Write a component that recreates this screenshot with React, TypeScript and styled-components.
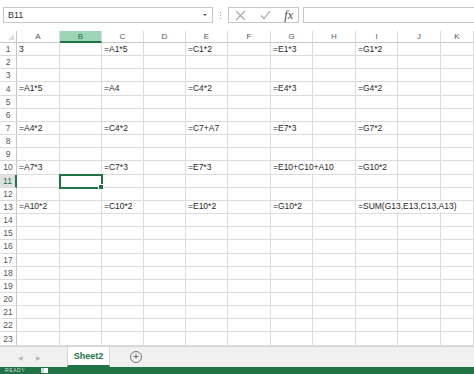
import React from "react";
import styled, { createGlobalStyle, css } from "styled-components";

const GREEN = "#217346";
const GRID = "#dcdcdc";
const HEAD_LINE = "#c8c8c8";

const COLUMNS = ["A", "B", "C", "D", "E", "F", "G", "H", "I", "J", "K"];
const ROW_COUNT = 23;
const ACTIVE = { col: "B", row: 11 };

const FORMULAS: Record<number, Record<string, string>> = {
  1: { A: "3", C: "=A1*5", E: "=C1*2", G: "=E1*3", I: "=G1*2" },
  4: { A: "=A1*5", C: "=A4", E: "=C4*2", G: "=E4*3", I: "=G4*2" },
  7: { A: "=A4*2", C: "=C4*2", E: "=C7+A7", G: "=E7*3", I: "=G7*2" },
  10: { A: "=A7*3", C: "=C7*3", E: "=E7*3", G: "=E10+C10+A10", I: "=G10*2" },
  13: { A: "=A10*2", C: "=C10*2", E: "=E10*2", G: "=G10*2", I: "=SUM(G13,E13,C13,A13)" },
};

const GlobalStyle = createGlobalStyle`
  html, body {
    margin: 0;
    padding: 0;
    background: #ffffff;
    font-family: "Liberation Sans", Arial, sans-serif;
  }
`;

const Window = styled.div`
  width: 474px;
  height: 374px;
  display: flex;
  flex-direction: column;
  overflow: hidden;
  background: #ffffff;
`;

/* formula bar */

const FormulaBar = styled.div`
  height: 31px;
  flex: none;
  display: flex;
  align-items: flex-start;
  padding: 7px 0 0 3px;
  box-sizing: border-box;
`;

const NameBox = styled.div`
  width: 210px;
  height: 16px;
  box-sizing: border-box;
  border: 1px solid #c6c6c6;
  display: flex;
  align-items: center;
  justify-content: space-between;
  padding: 0 5px 0 4px;
  font-size: 9px;
  color: #333;
`;

const DropArrow = styled.span`
  width: 0;
  height: 0;
  border-left: 2px solid transparent;
  border-right: 2px solid transparent;
  border-top: 2px solid #555;
`;

const Grip = styled.div`
  width: 15px;
  height: 16px;
  display: flex;
  flex-direction: column;
  align-items: center;
  justify-content: center;
  gap: 2px;

  span {
    width: 1px;
    height: 1px;
    background: #9a9a9a;
  }
`;

const FxBox = styled.div`
  width: 71px;
  height: 16px;
  box-sizing: border-box;
  border: 1px solid #c6c6c6;
  display: flex;
  align-items: center;
  justify-content: space-between;
  padding: 0 5px 0 6px;
`;

const FxLabel = styled.span`
  font-family: "Liberation Serif", "Times New Roman", serif;
  font-style: italic;
  font-size: 12px;
  color: #444;
  line-height: 1;
`;

const FormulaInput = styled.div`
  flex: 1;
  height: 16px;
  margin-left: 4px;
  box-sizing: border-box;
  border: 1px solid #c6c6c6;
  border-right: none;
`;

/* sheet */

const Sheet = styled.div`
  flex: none;
  height: 315px;
  display: grid;
  grid-template-columns: 17px 43px 42px 42px 42px 42px 43px 42px 43px 42px 43px 1fr;
  grid-template-rows: 12px repeat(${ROW_COUNT}, 13.17px);
  overflow: hidden;
  font-size: 8.5px;
  color: #1f1f1f;
`;

const Corner = styled.div`
  border-right: 1px solid ${HEAD_LINE};
  border-bottom: 1px solid ${HEAD_LINE};
  display: flex;
  align-items: flex-end;
  justify-content: flex-end;
  padding: 0 2px 2px 0;

  &::after {
    content: "";
    width: 0;
    height: 0;
    border-left: 6px solid transparent;
    border-bottom: 6px solid #dcdcdc;
  }
`;

const ColHeader = styled.div<{ $active?: boolean }>`
  display: flex;
  align-items: center;
  justify-content: center;
  font-size: 8px;
  color: #555;
  border-right: 1px solid ${GRID};
  border-bottom: 1px solid ${HEAD_LINE};

  ${(p) =>
    p.$active &&
    css`
      background: #9fd5b7;
      color: ${GREEN};
      border-bottom: 2px solid ${GREEN};
    `}
`;

const RowHeader = styled.div<{ $active?: boolean }>`
  display: flex;
  align-items: center;
  justify-content: center;
  font-size: 8.5px;
  color: #555;
  border-right: 1px solid ${HEAD_LINE};
  border-bottom: 1px solid ${GRID};

  ${(p) =>
    p.$active &&
    css`
      background: #e1e1e1;
      color: ${GREEN};
      border-right: 2px solid ${GREEN};
    `}
`;

const Cell = styled.div<{ $selected?: boolean }>`
  position: relative;
  display: flex;
  align-items: center;
  padding-left: 2px;
  white-space: nowrap;
  overflow: visible;
  border-right: 1px solid ${GRID};
  border-bottom: 1px solid ${GRID};

  ${(p) =>
    p.$selected &&
    css`
      z-index: 2;
      outline: 2px solid ${GREEN};
      outline-offset: -1px;

      &::after {
        content: "";
        position: absolute;
        right: -3px;
        bottom: -3px;
        width: 4px;
        height: 4px;
        background: ${GREEN};
        border: 1px solid #ffffff;
      }
    `}
`;

const CellText = styled.span`
  position: relative;
  z-index: 1;
  background: #ffffff;
  padding-right: 2px;
  line-height: 11px;
`;

/* sheet tabs */

const TabBar = styled.div`
  flex: none;
  height: 21px;
  box-sizing: border-box;
  display: flex;
  align-items: stretch;
  background: #f0f0f0;
  border-top: 1px solid #d4d4d4;
`;

const NavArrows = styled.div`
  width: 67px;
  display: flex;
  align-items: center;
  gap: 13px;
  padding-left: 18px;
  box-sizing: border-box;
  font-size: 6px;
  color: #b8b8b8;
`;

const SheetTab = styled.div`
  width: 43px;
  box-sizing: border-box;
  background: #ffffff;
  border-left: 1px solid #d4d4d4;
  border-right: 1px solid #d4d4d4;
  border-bottom: 2px solid ${GREEN};
  display: flex;
  align-items: center;
  justify-content: center;
  font-size: 9px;
  font-weight: bold;
  color: ${GREEN};
`;

const AddSheet = styled.div`
  width: 10px;
  height: 10px;
  margin: 4px 0 0 20px;
  border: 1px solid #777;
  border-radius: 50%;
  display: flex;
  align-items: center;
  justify-content: center;
  font-size: 10px;
  line-height: 1;
  color: #666;
`;

/* status bar */

const StatusBar = styled.div`
  flex: 1;
  background: ${GREEN};
  display: flex;
  align-items: center;
  padding-left: 5px;
  gap: 16px;
  overflow: hidden;
  font-size: 5px;
  line-height: 5px;
  color: rgba(255, 255, 255, 0.75);
  letter-spacing: 0.6px;
`;

const ViewIcon = styled.span`
  width: 7px;
  height: 5px;
  background: #ffffff;
  box-shadow: inset 3px 0 0 #c9ddd2;
`;

const Cross = () => (
  <svg width="11" height="11" viewBox="0 0 11 11">
    <path d="M1 1 L10 10 M10 1 L1 10" stroke="#a6a6a6" strokeWidth="1.1" fill="none" />
  </svg>
);

const Check = () => (
  <svg width="11" height="10" viewBox="0 0 11 10">
    <path d="M1 5.5 L4 8.5 L10 1" stroke="#a6a6a6" strokeWidth="1.2" fill="none" />
  </svg>
);

export default function App() {
  const rows = Array.from({ length: ROW_COUNT }, (_, i) => i + 1);

  return (
    <Window>
      <GlobalStyle />
      <FormulaBar>
        <NameBox>
          B11
          <DropArrow />
        </NameBox>
        <Grip>
          <span />
          <span />
          <span />
        </Grip>
        <FxBox>
          <Cross />
          <Check />
          <FxLabel>fx</FxLabel>
        </FxBox>
        <FormulaInput />
      </FormulaBar>

      <Sheet>
        <Corner />
        {COLUMNS.map((c) => (
          <ColHeader key={c} $active={c === ACTIVE.col}>
            {c}
          </ColHeader>
        ))}
        {rows.map((r) => (
          <React.Fragment key={r}>
            <RowHeader $active={r === ACTIVE.row}>{r}</RowHeader>
            {COLUMNS.map((c) => {
              const value = FORMULAS[r]?.[c];
              return (
                <Cell key={c} $selected={r === ACTIVE.row && c === ACTIVE.col}>
                  {value && <CellText>{value}</CellText>}
                </Cell>
              );
            })}
          </React.Fragment>
        ))}
      </Sheet>

      <TabBar>
        <NavArrows>
          <span>◀</span>
          <span>▶</span>
        </NavArrows>
        <SheetTab>Sheet2</SheetTab>
        <AddSheet>+</AddSheet>
      </TabBar>

      <StatusBar>
        <span>READY</span>
        <ViewIcon />
      </StatusBar>
    </Window>
  );
}
